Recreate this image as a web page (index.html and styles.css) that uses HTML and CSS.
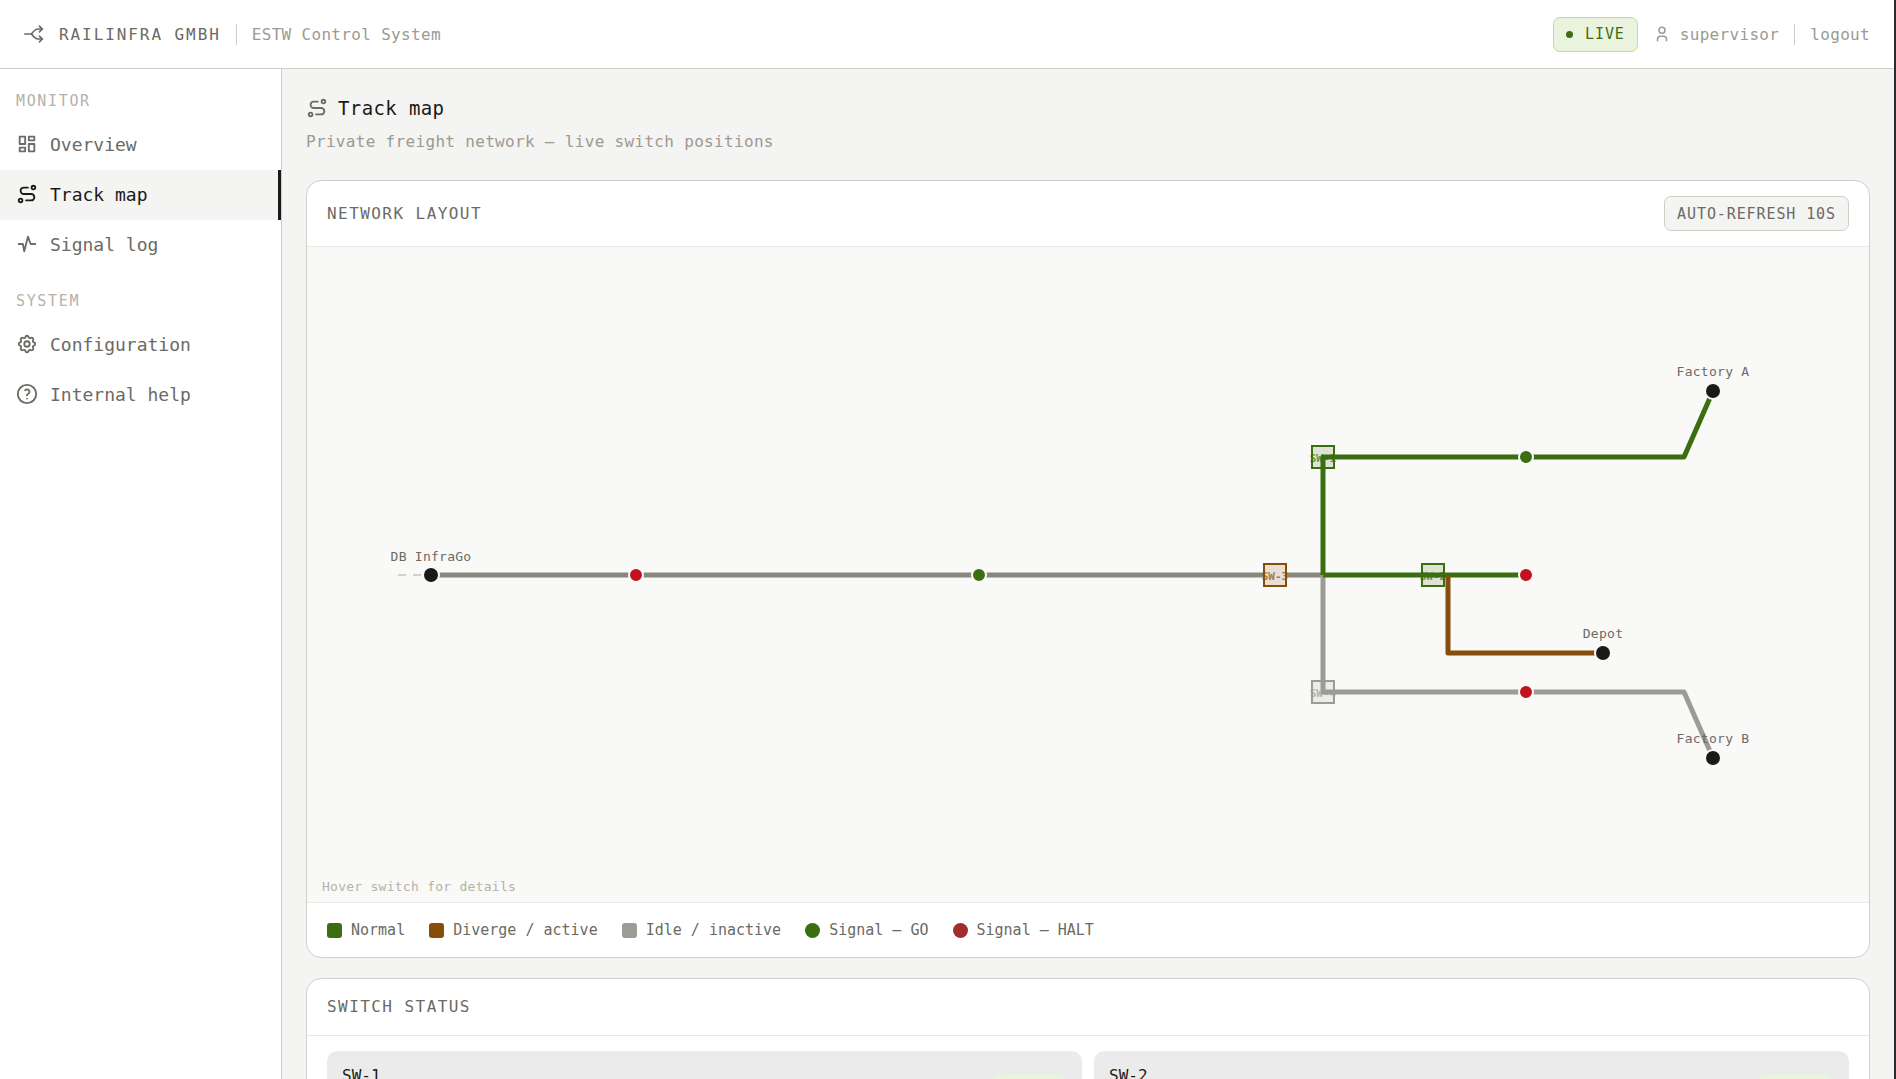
FILE: index.html
```html
<!DOCTYPE html>
<html lang="en">
<head>
  <meta charset="UTF-8" />
  <title>Track map – ESTW Control System</title>
  <meta name="viewport" content="width=device-width, initial-scale=1.0"/>
  <link rel="stylesheet" href="styles.css">
</head>
<body>

  <header class="topbar">
    <svg class="icon icon-logo" viewBox="0 0 24 24">
      <path d="M1 12h8"/>
      <path d="M22 6h-5c-4 0 -5.500 2.500 -8 6c2.500 3.500 4 6 8 6h5"/>
      <path d="M18.500 2.500l3.500 3.500l-3.500 3.500M18.500 14.500l3.500 3.500l-3.500 3.500"/>
    </svg>
    <span class="brand">RAILINFRA GMBH</span>
    <span class="divider"></span>
    <span class="system">ESTW Control System</span>

    <div class="topbar-right">
      <span class="badge badge-live"><i class="dot"></i>LIVE</span>
      <span class="user">
        <svg class="icon icon-user" viewBox="0 0 24 24">
          <path d="M8 7a4 4 0 1 0 8 0a4 4 0 0 0 -8 0M6 21v-2a4 4 0 0 1 4 -4h4a4 4 0 0 1 4 4v2"/>
        </svg>
        supervisor
      </span>
      <span class="divider"></span>
      <a class="logout" href="#">logout</a>
    </div>
  </header>

  <div class="layout">
    <nav class="sidebar">
      <div class="nav-label">MONITOR</div>
      <a class="nav-item" href="#">
        <svg class="icon" viewBox="0 0 24 24"><path d="M4 4h6v8h-6zM4 16h6v4h-6zM14 12h6v8h-6zM14 4h6v4h-6z"/></svg>
        Overview
      </a>
      <a class="nav-item active" href="#">
        <svg class="icon" viewBox="0 0 24 24"><path d="M3 19a2 2 0 1 0 4 0a2 2 0 0 0 -4 0M19 7a2 2 0 1 0 0 -4a2 2 0 0 0 0 4M11 19h5.500a3.500 3.500 0 0 0 0 -7h-8a3.500 3.500 0 0 1 0 -7h4.500"/></svg>
        Track map
      </a>
      <a class="nav-item" href="#">
        <svg class="icon" viewBox="0 0 24 24"><path d="M3 12h4.500l1.500 8l4 -16l3 8h5"/></svg>
        Signal log
      </a>

      <div class="nav-label">SYSTEM</div>
      <a class="nav-item" href="#">
        <svg class="icon" viewBox="0 0 24 24">
          <path d="M10.325 4.317c.426 -1.756 2.924 -1.756 3.350 0a1.724 1.724 0 0 0 2.573 1.066c1.543 -.940 3.310 .826 2.370 2.370a1.724 1.724 0 0 0 1.065 2.572c1.756 .426 1.756 2.924 0 3.350a1.724 1.724 0 0 0 -1.066 2.573c.940 1.543 -.826 3.310 -2.370 2.370a1.724 1.724 0 0 0 -2.572 1.065c-.426 1.756 -2.924 1.756 -3.350 0a1.724 1.724 0 0 0 -2.573 -1.066c-1.543 .940 -3.310 -.826 -2.370 -2.370a1.724 1.724 0 0 0 -1.065 -2.572c-1.756 -.426 -1.756 -2.924 0 -3.350a1.724 1.724 0 0 0 1.066 -2.573c-.940 -1.543 .826 -3.310 2.370 -2.370c1 .608 2.296 .070 2.572 -1.065z"/>
          <circle cx="12" cy="12" r="3"/>
        </svg>
        Configuration
      </a>
      <a class="nav-item" href="#">
        <svg class="icon" viewBox="0 0 24 24">
          <circle cx="12" cy="12" r="10"/>
          <path d="M12 17v.01M12 13.500a1.500 1.500 0 0 1 1 -1.500a2.600 2.600 0 1 0 -3 -4"/>
        </svg>
        Internal help
      </a>
    </nav>

    <main class="content">
      <h1>
        <svg class="icon" viewBox="0 0 24 24"><path d="M3 19a2 2 0 1 0 4 0a2 2 0 0 0 -4 0M19 7a2 2 0 1 0 0 -4a2 2 0 0 0 0 4M11 19h5.500a3.500 3.500 0 0 0 0 -7h-8a3.500 3.500 0 0 1 0 -7h4.500"/></svg>
        Track map
      </h1>
      <p class="subtitle">Private freight network — live switch positions</p>

      <section class="card">
        <div class="card-header">
          <h2>NETWORK LAYOUT</h2>
          <span class="badge">AUTO-REFRESH 10S</span>
        </div>

        <svg class="map" viewBox="0 0 1562 655">
          <!-- switches -->
          <g class="switch normal">
            <rect x="1005" y="199" width="22" height="22"/>
            <text x="1016" y="215">SW-1</text>
          </g>
          <g class="switch normal">
            <rect x="1115" y="317" width="22" height="22"/>
            <text x="1126" y="333">SW-2</text>
          </g>
          <g class="switch idle">
            <rect x="1005" y="434" width="22" height="22"/>
            <text x="1016" y="450">SW-4</text>
          </g>

          <!-- tracks -->
          <path class="track stub" d="M91 328h24"/>
          <path class="track main" d="M124 328H957M979 328H1016"/>
          <path class="track idle" d="M1016 328V445H1377L1406 511"/>
          <path class="track normal" d="M1016 328V210H1377L1406 144"/>
          <path class="track normal" d="M1016 328H1218"/>
          <path class="track diverge" d="M1141 328V406H1296"/>

          <g class="switch diverge">
            <rect x="957" y="317" width="22" height="22"/>
            <text x="968" y="333">SW-3</text>
          </g>

          <!-- signals -->
          <circle class="signal halt" cx="329" cy="328" r="7"/>
          <circle class="signal go" cx="672" cy="328" r="7"/>
          <circle class="signal go" cx="1219" cy="210" r="7"/>
          <circle class="signal halt" cx="1219" cy="328" r="7"/>
          <circle class="signal halt" cx="1219" cy="445" r="7"/>

          <!-- stations -->
          <circle class="station" cx="124" cy="328" r="8"/>
          <circle class="station" cx="1406" cy="144" r="8"/>
          <circle class="station" cx="1296" cy="406" r="8"/>
          <circle class="station" cx="1406" cy="511" r="8"/>
          <text class="name" x="124" y="314">DB InfraGo</text>
          <text class="name" x="1406" y="129">Factory A</text>
          <text class="name" x="1296" y="391">Depot</text>
          <text class="name" x="1406" y="496">Factory B</text>

          <text class="hint" x="15" y="644">Hover switch for details</text>
        </svg>

        <div class="legend">
          <span><i class="swatch normal"></i>Normal</span>
          <span><i class="swatch diverge"></i>Diverge / active</span>
          <span><i class="swatch idle"></i>Idle / inactive</span>
          <span><i class="swatch round normal"></i>Signal — GO</span>
          <span><i class="swatch round halt"></i>Signal — HALT</span>
        </div>
      </section>

      <section class="card">
        <div class="card-header">
          <h2>SWITCH STATUS</h2>
        </div>
        <div class="switches">
          <div class="switch-box">
            <div>
              <h3>SW-1</h3>
              <p>Factory A</p>
            </div>
            <span class="pill">normal</span>
          </div>
          <div class="switch-box">
            <div>
              <h3>SW-2</h3>
              <p>Depot</p>
            </div>
            <span class="pill">normal</span>
          </div>
        </div>
      </section>
    </main>
  </div>

</body>
</html>
```
FILE: styles.css
```css
:root {
  --green:  #3b6d11;
  --brown:  #854f0b;
  --red:    #a32d2d;
  --idle:   #9c9c96;
  --ink:    #1a1a18;
  --text:   #6b6a64;
  --muted:  #9c9a92;
  --line:   #cfcfc7;
  --line-2: #e8e8e6;
  --page:   #f4f4f2;
  --canvas: #f9f9f7;
}

* {
  box-sizing: border-box;
  margin: 0;
  padding: 0;
}

body {
  display: flex;
  flex-direction: column;
  height: 100vh;
  overflow: hidden;
  background: var(--page);
  border-right: 2px solid #2b2b2b;
  color: var(--text);
  font-family: "DejaVu Sans Mono", "Liberation Mono", monospace;
  font-size: 16px;
}

a {
  color: inherit;
  text-decoration: none;
}

.icon {
  width: 22px;
  height: 22px;
  flex: none;
  fill: none;
  stroke: currentColor;
  stroke-width: 2;
  stroke-linecap: round;
  stroke-linejoin: round;
}

/* top bar */
.topbar {
  display: flex;
  align-items: center;
  gap: 15px;
  height: 69px;
  flex: none;
  padding: 0 24px;
  background: white;
  border-bottom: 1px solid var(--line);
}

.icon-logo {
  width: 20px;
  height: 20px;
}

.icon-user {
  width: 18px;
  height: 18px;
}

.brand {
  font-weight: 500;
  letter-spacing: 0.12em;
}

.divider {
  width: 1px;
  height: 21px;
  background: var(--line);
}

.system, .user, .logout {
  color: var(--muted);
  letter-spacing: 0.02em;
}

.topbar-right {
  display: flex;
  align-items: center;
  gap: 15px;
  margin-left: auto;
}

.user {
  display: flex;
  align-items: center;
  gap: 9px;
}

.badge {
  display: flex;
  align-items: center;
  height: 35px;
  padding: 0 12px;
  border: 1px solid var(--line);
  border-radius: 7px;
  background: var(--page);
  font-size: 15px;
  letter-spacing: 0.06em;
}

.badge-live {
  gap: 12px;
  color: var(--green);
  background: #eaf3de;
  border-color: #c0dd97;
}

.dot {
  width: 7px;
  height: 7px;
  border-radius: 50%;
  background: var(--green);
}

/* sidebar */
.layout {
  display: flex;
  flex: 1;
  min-height: 0;
}

.sidebar {
  width: 282px;
  flex: none;
  padding-top: 1px;
  background: white;
  border-right: 1px solid var(--line);
}

.nav-label {
  padding: 21px 16px 9px;
  font-size: 15px;
  line-height: 20px;
  letter-spacing: 0.11em;
  color: #b4b2a9;
}

.nav-item {
  display: flex;
  align-items: center;
  gap: 12px;
  height: 50px;
  padding: 0 16px 2px;
  font-size: 18px;
}

.nav-item.active {
  color: var(--ink);
  background: var(--page);
  border-right: 3px solid var(--ink);
}

/* content */
.content {
  flex: 1;
  min-width: 0;
  padding: 24px;
  overflow: hidden;
}

h1 {
  display: flex;
  align-items: center;
  gap: 10px;
  font-size: 19px;
  font-weight: 500;
  line-height: 30px;
  letter-spacing: 0.02em;
  color: var(--ink);
}

h1 .icon {
  color: var(--text);
}

.subtitle {
  margin: 8px 0 27px;
  line-height: 22px;
  letter-spacing: 0.02em;
  color: var(--muted);
}

.card {
  margin-bottom: 20px;
  background: white;
  border: 1px solid var(--line);
  border-radius: 15px;
  overflow: hidden;
}

.card-header {
  display: flex;
  align-items: center;
  justify-content: space-between;
  padding: 15px 20px;
  border-bottom: 1px solid var(--line-2);
}

h2 {
  font-size: 16px;
  font-weight: 500;
  line-height: 26px;
  letter-spacing: 0.09em;
}

/* track map */
.map {
  display: block;
  width: 100%;
  background: var(--canvas);
}

.track {
  fill: none;
  stroke-width: 5;
  stroke-linejoin: round;
}

.track.main    { stroke: #888780; }
.track.idle    { stroke: var(--idle); }
.track.normal  { stroke: var(--green); }
.track.diverge { stroke: var(--brown); }

.track.stub {
  stroke: #d3d1c7;
  stroke-width: 2;
  stroke-dasharray: 8 7;
}

.switch rect {
  fill-opacity: 0.15;
  stroke-width: 2;
}

.switch text {
  font-size: 11px;
  font-weight: bold;
  text-anchor: middle;
  stroke: none;
  opacity: 0.7;
}

.switch.normal  { fill: var(--green); stroke: var(--green); }
.switch.diverge { fill: var(--brown); stroke: var(--brown); }
.switch.idle    { fill: var(--idle);  stroke: var(--idle); }

.signal {
  stroke: var(--canvas);
  stroke-width: 2;
}

.signal.go   { fill: var(--green); }
.signal.halt { fill: #c1121f; }

.station {
  fill: var(--ink);
  stroke: var(--canvas);
  stroke-width: 2;
}

.name {
  font-size: 13px;
  letter-spacing: 0.02em;
  text-anchor: middle;
  fill: var(--text);
}

.hint {
  font-size: 13px;
  letter-spacing: 0.02em;
  fill: #b4b2a9;
}

/* legend */
.legend {
  display: flex;
  flex-wrap: wrap;
  gap: 24px;
  padding: 15px 20px;
  border-top: 1px solid var(--line-2);
  font-size: 15px;
  line-height: 24px;
}

.legend span {
  display: flex;
  align-items: center;
  gap: 9px;
}

.swatch {
  width: 15px;
  height: 15px;
  border-radius: 3px;
}

.swatch.round { border-radius: 50%; }

.swatch.normal  { background: var(--green); }
.swatch.diverge { background: var(--brown); }
.swatch.idle    { background: var(--idle); }
.swatch.halt    { background: var(--red); }

/* switch status */
.switches {
  display: grid;
  grid-template-columns: 1fr 1fr;
  gap: 12px;
  padding: 15px 20px;
}

.switch-box {
  display: flex;
  align-items: center;
  justify-content: space-between;
  padding: 15px;
  border-radius: 10px;
  background: #ebebeb;
  line-height: 20px;
}

h3 {
  font-size: 16px;
  font-weight: 500;
  color: var(--ink);
}

.pill {
  padding: 2px 15px;
  border-radius: 12px;
  background: #eaf3de;
  color: var(--green);
  font-size: 13px;
}
```
